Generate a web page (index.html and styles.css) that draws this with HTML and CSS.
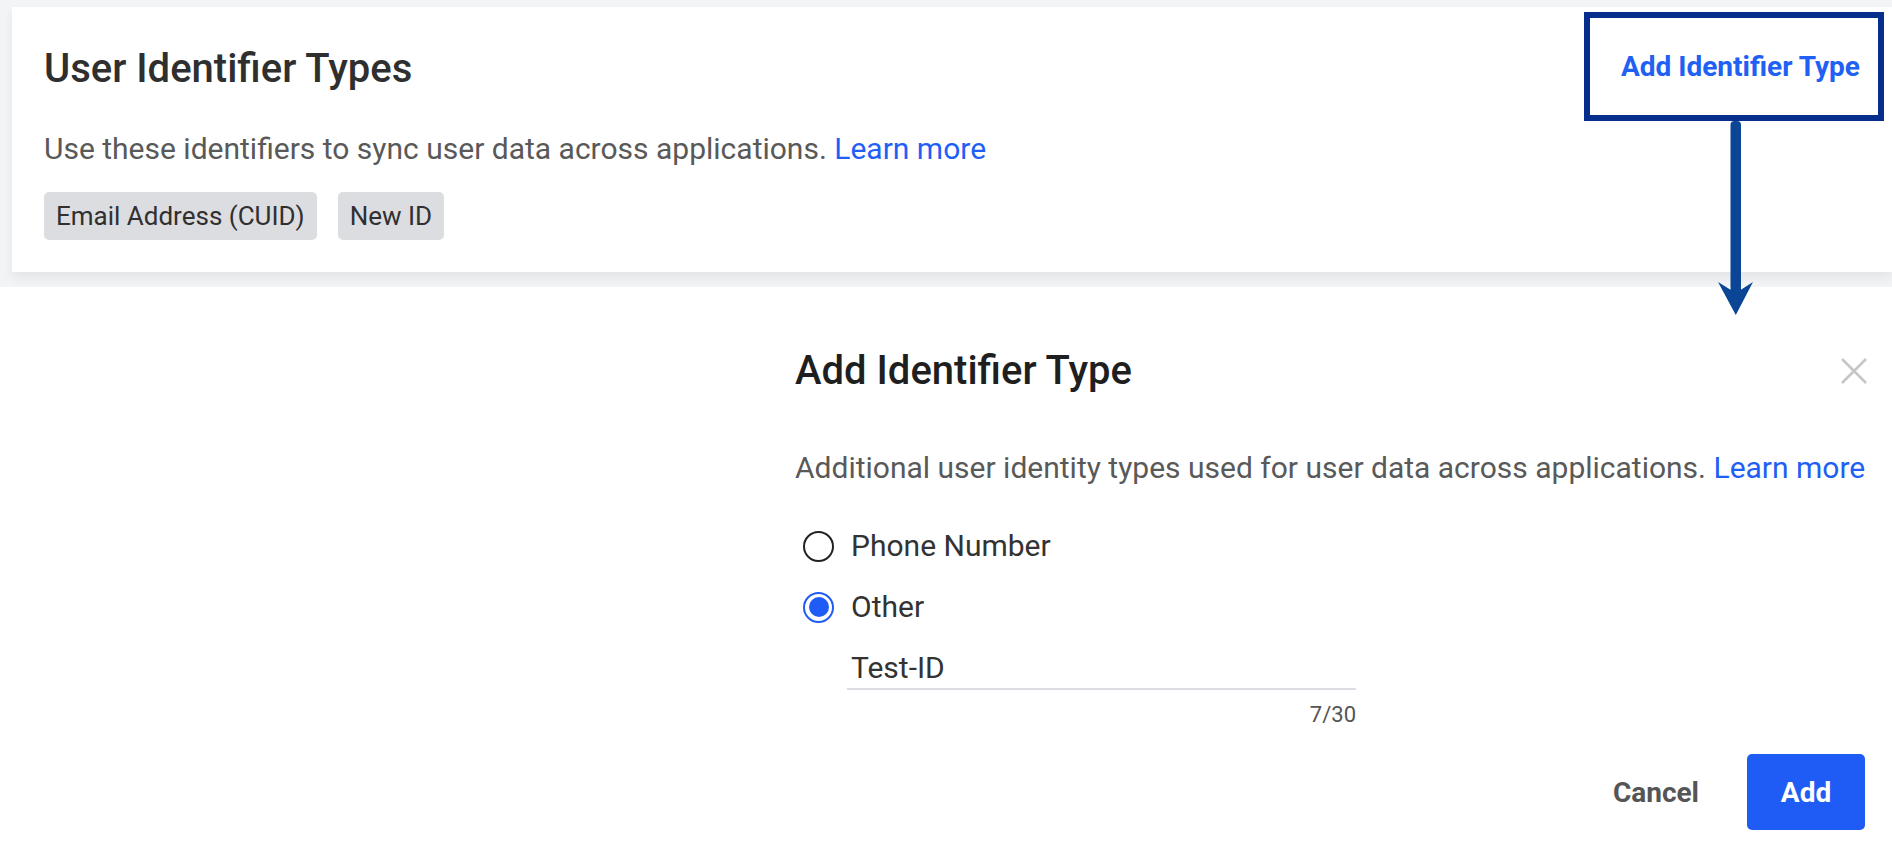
FILE: index.html
```html
<!DOCTYPE html>
<html lang="en">
<head>
<meta charset="utf-8">
<title>User Identifier Types</title>
<link rel="stylesheet" href="styles.css">
</head>
<body>
<div class="page">
  <section class="top">
    <div class="card">
      <div class="card-head">
        <h1 class="card-title">User Identifier Types</h1>
        <div class="highlight"><a class="add-link" href="#">Add Identifier Type</a></div>
      </div>
      <p class="card-desc">Use these identifiers to sync user data across applications. <a class="learn" href="#">Learn more</a></p>
      <div class="chips">
        <span class="chip">Email Address (CUID)</span>
        <span class="chip">New ID</span>
      </div>
    </div>
  </section>

  <section class="modal-area">
    <div class="modal">
      <div class="modal-head">
        <h2 class="modal-title">Add Identifier Type</h2>
        <button class="close" aria-label="Close">
          <svg width="28" height="26" viewBox="0 0 28 26"><path d="M2 1 L26 25 M26 1 L2 25" stroke="#c6c6c6" stroke-width="2.6" fill="none"/></svg>
        </button>
      </div>
      <p class="modal-desc">Additional user identity types used for user data across applications. <a class="learn" href="#">Learn more</a></p>
      <div class="options">
        <label class="option"><span class="radio"></span><span class="opt-label">Phone Number</span></label>
        <label class="option"><span class="radio checked"></span><span class="opt-label">Other</span></label>
      </div>
      <div class="field">
        <div class="input">Test-ID</div>
        <div class="counter">7/30</div>
      </div>
      <div class="actions">
        <button class="btn-cancel">Cancel</button>
        <button class="btn-add">Add</button>
      </div>
    </div>
  </section>

  <svg class="arrow" width="40" height="200" viewBox="0 0 40 200">
    <rect x="14.5" y="3" width="10.5" height="176" rx="4" fill="#0b4596"/>
    <path d="M2 164 L19.8 197 L37 164 L19.8 175 Z" fill="#0b4596"/>
  </svg>
</div>
</body>
</html>
```

FILE: styles.css
```css
* { box-sizing: border-box; }
html, body { margin: 0; padding: 0; background: #ffffff; }
body { font-family: Roboto, "Liberation Sans", Arial, sans-serif; width: 1892px; height: 866px; overflow: hidden; }
.page { position: relative; width: 1892px; height: 866px; }

.top { background: #f3f4f6; padding: 7px 0 15px 12px; }
.card {
  background: #ffffff;
  height: 265px;
  padding: 5px 8px 32px 32px;
  box-shadow: 0 6px 10px rgba(30, 40, 60, 0.07);
  position: relative;
}
.card-head { display: flex; justify-content: space-between; align-items: center; height: 109px; }
.card-title { margin: 4px 0 0; font-size: 40px; line-height: 48px; font-weight: 500; color: #2f2f2f; }
.highlight {
  width: 300px; height: 109px;
  border: 6px solid #062e8c;
  display: flex; align-items: center;
  padding-left: 31px;
}
.add-link { font-size: 28px; line-height: 36px; font-weight: 700; color: #2060f4; text-decoration: none; }
.card-desc { margin: 10px 0 0; font-size: 30px; line-height: 36px; color: #595959; white-space: nowrap; }
.learn { color: #1f5ff6; text-decoration: none; }
.chips { display: flex; gap: 21px; margin-top: 25px; }
.chip {
  display: inline-flex; align-items: center;
  height: 48px; padding: 0 12px;
  background: #dcdde1; border-radius: 5px;
  font-size: 26px; line-height: 30px; color: #303030;
}

.modal-area { padding-top: 62px; }
.modal { margin-left: 795px; width: 1070px; }
.modal-head { display: flex; justify-content: space-between; align-items: center; }
.modal-title { margin: 0; font-size: 40px; line-height: 44px; font-weight: 500; color: #1f1f1f; }
.close { border: 0; background: none; padding: 0; margin-right: -3px; display: flex; cursor: pointer; }
.modal-desc { margin: 57px 0 0; font-size: 30px; line-height: 36px; color: #595959; white-space: nowrap; }
.options { display: flex; flex-direction: column; gap: 17px; margin-top: 38px; }
.option { display: flex; align-items: center; height: 44px; padding-left: 8px; }
.radio {
  width: 31px; height: 31px; border-radius: 50%;
  border: 2px solid #222222; background: #fff;
  display: inline-flex; align-items: center; justify-content: center;
  margin-right: 17px; flex: none;
}
.radio.checked { border: 2.5px solid #1f5cf6; }
.radio.checked::after { content: ""; width: 20px; height: 20px; border-radius: 50%; background: #1f5cf6; }
.opt-label { font-size: 30px; line-height: 36px; color: #333333; }
.field { margin: 21px 0 0 52px; width: 509px; }
.input { font-size: 30px; line-height: 36px; color: #333333; padding: 0 0 2px 4px; border-bottom: 2px solid #dcdde2; }
.counter { margin-top: 12px; text-align: right; font-size: 22px; line-height: 26px; color: #555555; }
.actions { display: flex; justify-content: flex-end; align-items: center; gap: 48px; margin-top: 26px; }
.btn-cancel { border: 0; background: none; padding: 0; font-family: inherit; font-size: 28px; font-weight: 700; color: #555555; cursor: pointer; }
.btn-add {
  border: 0; width: 118px; height: 76px; border-radius: 5px;
  background: #1f5cf6; color: #ffffff;
  font-family: inherit; font-size: 28px; font-weight: 700; cursor: pointer;
}

.arrow { position: absolute; left: 1716px; top: 118px; }
```
